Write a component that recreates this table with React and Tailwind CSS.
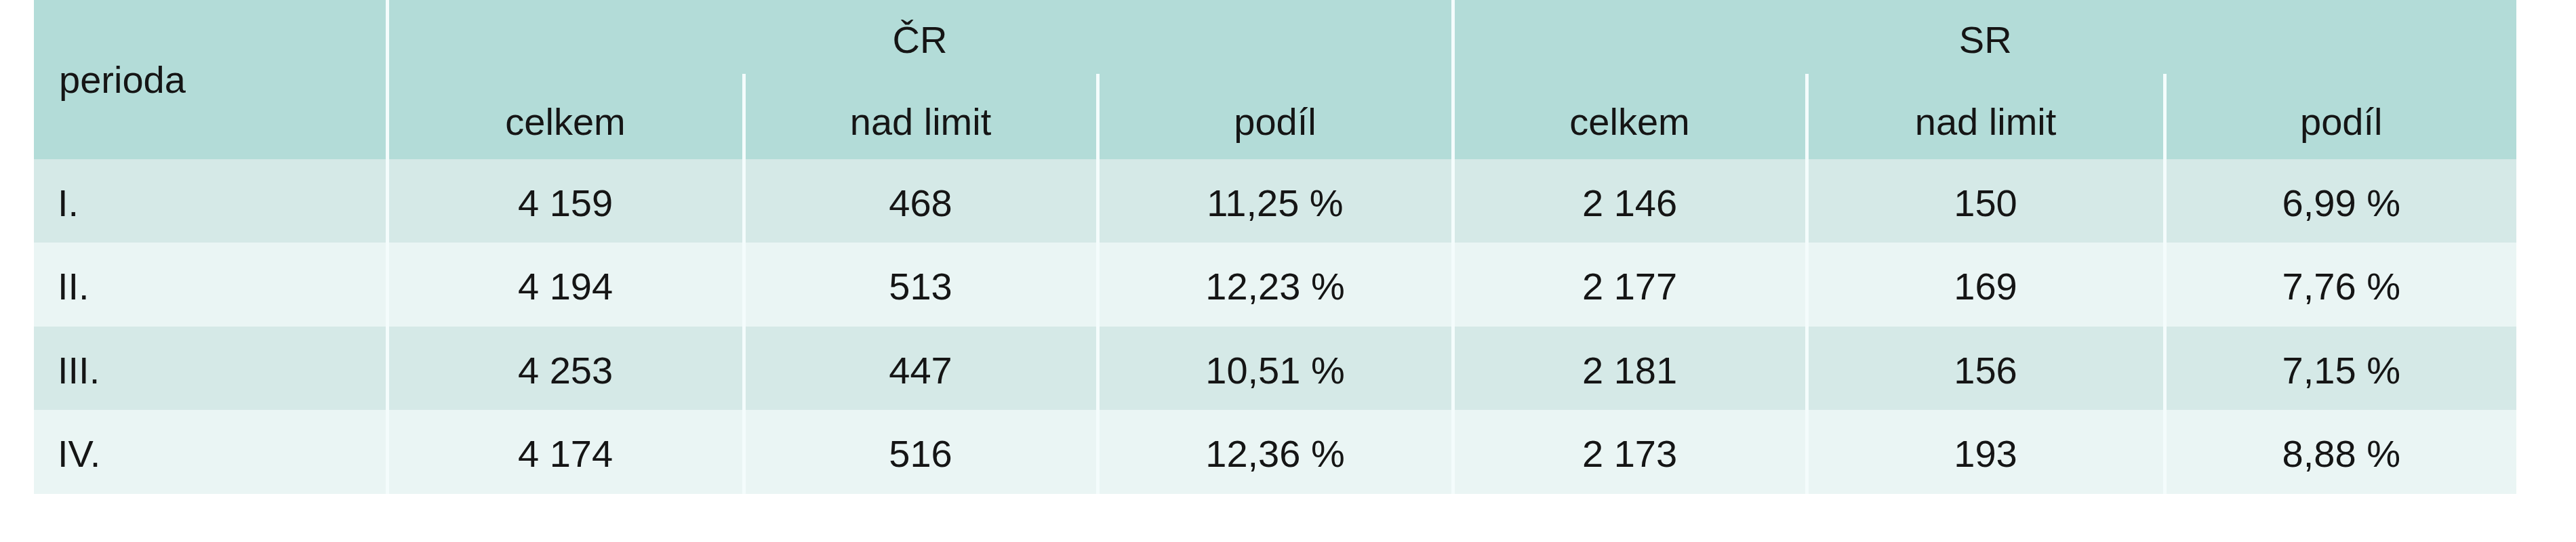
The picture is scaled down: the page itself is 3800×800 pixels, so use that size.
const rows = [
  { period: "I.", cr: ["4 159", "468", "11,25 %"], sr: ["2 146", "150", "6,99 %"] },
  { period: "II.", cr: ["4 194", "513", "12,23 %"], sr: ["2 177", "169", "7,76 %"] },
  { period: "III.", cr: ["4 253", "447", "10,51 %"], sr: ["2 181", "156", "7,15 %"] },
  { period: "IV.", cr: ["4 174", "516", "12,36 %"], sr: ["2 173", "193", "8,88 %"] },
];

const subHeads = ["celkem", "nad limit", "podíl"];

export default function App() {
  return (
    <div className="h-[800px] w-[3800px] bg-white pl-[50px] font-['Liberation_Sans',Arial,sans-serif] text-[56px] leading-none text-[#151515]">
      <table className="w-[3662px] table-fixed border-collapse">
        <colgroup>
          <col className="w-[521px]" />
          <col className="w-[526px]" />
          <col className="w-[522px]" />
          <col className="w-[524px]" />
          <col className="w-[522px]" />
          <col className="w-[528px]" />
          <col className="w-[519px]" />
        </colgroup>
        <thead className="bg-[#b3dcd8]">
          <tr className="h-[109px]">
            <th rowSpan={2} className="pl-[37px] text-left font-normal">
              perioda
            </th>
            <th colSpan={3} className="border-l-[5px] border-[#f4fcfc] pt-[8px] font-normal">
              ČR
            </th>
            <th colSpan={3} className="border-l-[5px] border-[#f4fcfc] pt-[8px] font-normal">
              SR
            </th>
          </tr>
          <tr className="h-[126px]">
            {[...subHeads, ...subHeads].map((label, i) => (
              <th
                key={i}
                className="border-l-[5px] border-[#f4fcfc] pt-[16px] text-center font-normal"
              >
                {label}
              </th>
            ))}
          </tr>
        </thead>
        <tbody>
          {rows.map((row, i) => (
            <tr
              key={row.period}
              className={i % 2 === 0 ? "h-[123px] bg-[#d5e9e7]" : "h-[124px] bg-[#eaf5f4]"}
            >
              <td className="pl-[35px] pt-[6px] text-left">{row.period}</td>
              {[...row.cr, ...row.sr].map((value, j) => (
                <td key={j} className="border-l-[5px] border-[#f4fcfc] pt-[6px] text-center">
                  {value}
                </td>
              ))}
            </tr>
          ))}
        </tbody>
      </table>
    </div>
  );
}
